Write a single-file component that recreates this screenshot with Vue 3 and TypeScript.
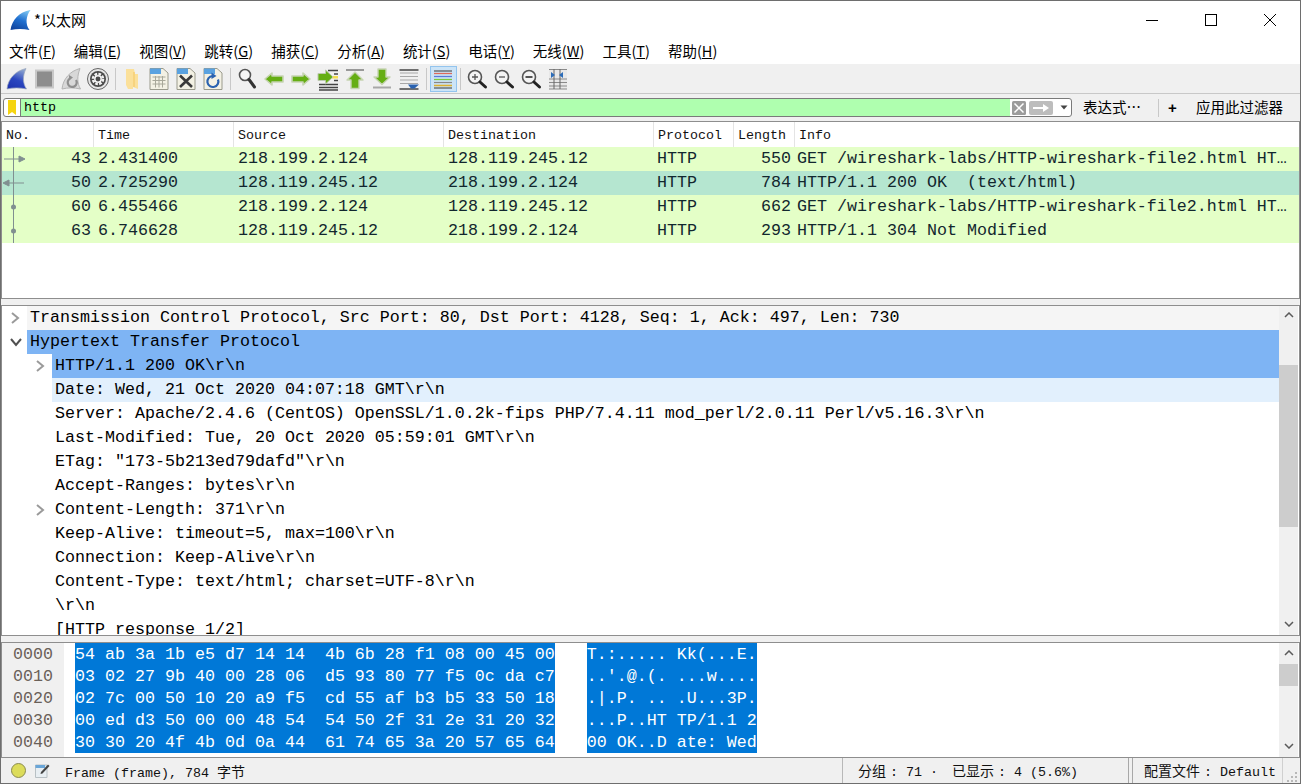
<script setup lang="ts">
interface Packet {
  no: number;
  time: string;
  src: string;
  dst: string;
  proto: string;
  len: number;
  info: string;
  mark: "out" | "in" | "dot";
  sel?: boolean;
}
interface TreeRow {
  text: string;
  level: number;
  arrow?: "right" | "down";
  cls?: string;
}

const menus = [
  ["文件(", "F", ")"],
  ["编辑(", "E", ")"],
  ["视图(", "V", ")"],
  ["跳转(", "G", ")"],
  ["捕获(", "C", ")"],
  ["分析(", "A", ")"],
  ["统计(", "S", ")"],
  ["电话(", "Y", ")"],
  ["无线(", "W", ")"],
  ["工具(", "T", ")"],
  ["帮助(", "H", ")"],
];

const columns = [
  { name: "No.", cls: "c-no" },
  { name: "Time", cls: "c-time" },
  { name: "Source", cls: "c-src" },
  { name: "Destination", cls: "c-dst" },
  { name: "Protocol", cls: "c-proto" },
  { name: "Length", cls: "c-len" },
  { name: "Info", cls: "c-info" },
];

const packets: Packet[] = [
  { no: 43, time: "2.431400", src: "218.199.2.124", dst: "128.119.245.12", proto: "HTTP", len: 550, info: "GET /wireshark-labs/HTTP-wireshark-file2.html HT…", mark: "out" },
  { no: 50, time: "2.725290", src: "128.119.245.12", dst: "218.199.2.124", proto: "HTTP", len: 784, info: "HTTP/1.1 200 OK  (text/html)", mark: "in", sel: true },
  { no: 60, time: "6.455466", src: "218.199.2.124", dst: "128.119.245.12", proto: "HTTP", len: 662, info: "GET /wireshark-labs/HTTP-wireshark-file2.html HT…", mark: "dot" },
  { no: 63, time: "6.746628", src: "128.119.245.12", dst: "218.199.2.124", proto: "HTTP", len: 293, info: "HTTP/1.1 304 Not Modified", mark: "dot" },
];

const tree: TreeRow[] = [
  { text: "Transmission Control Protocol, Src Port: 80, Dst Port: 4128, Seq: 1, Ack: 497, Len: 730", level: 0, arrow: "right", cls: "hover" },
  { text: "Hypertext Transfer Protocol", level: 0, arrow: "down", cls: "sel" },
  { text: "HTTP/1.1 200 OK\\r\\n", level: 1, arrow: "right", cls: "sel" },
  { text: "Date: Wed, 21 Oct 2020 04:07:18 GMT\\r\\n", level: 1, cls: "related" },
  { text: "Server: Apache/2.4.6 (CentOS) OpenSSL/1.0.2k-fips PHP/7.4.11 mod_perl/2.0.11 Perl/v5.16.3\\r\\n", level: 1 },
  { text: "Last-Modified: Tue, 20 Oct 2020 05:59:01 GMT\\r\\n", level: 1 },
  { text: 'ETag: "173-5b213ed79dafd"\\r\\n', level: 1 },
  { text: "Accept-Ranges: bytes\\r\\n", level: 1 },
  { text: "Content-Length: 371\\r\\n", level: 1, arrow: "right" },
  { text: "Keep-Alive: timeout=5, max=100\\r\\n", level: 1 },
  { text: "Connection: Keep-Alive\\r\\n", level: 1 },
  { text: "Content-Type: text/html; charset=UTF-8\\r\\n", level: 1 },
  { text: "\\r\\n", level: 1 },
  { text: "[HTTP response 1/2]", level: 1 },
];

const hexRows = [
  ["0000", "54 ab 3a 1b e5 d7 14 14  4b 6b 28 f1 08 00 45 00", "T.:..... Kk(...E."],
  ["0010", "03 02 27 9b 40 00 28 06  d5 93 80 77 f5 0c da c7", "..'.@.(. ...w...."],
  ["0020", "02 7c 00 50 10 20 a9 f5  cd 55 af b3 b5 33 50 18", ".|.P. .. .U...3P."],
  ["0030", "00 ed d3 50 00 00 48 54  54 50 2f 31 2e 31 20 32", "...P..HT TP/1.1 2"],
  ["0040", "30 30 20 4f 4b 0d 0a 44  61 74 65 3a 20 57 65 64", "00 OK..D ate: Wed"],
];
</script>

<template>
  <div class="window">
    <header class="titlebar">
      <svg class="logo" width="21" height="22" viewBox="0 0 21 22">
        <defs>
          <linearGradient id="fin" x1="0.7" y1="0" x2="0.3" y2="1">
            <stop offset="0" stop-color="#7cc4f0" />
            <stop offset="0.5" stop-color="#1f6fd0" />
            <stop offset="1" stop-color="#10459f" />
          </linearGradient>
        </defs>
        <path d="M0.5 21C2 11 9 3 20.5 1C16 7 15 15 19.500 21C13 19.5 7 19.5 0.5 21Z" fill="url(#fin)" />
      </svg>
      <span class="title">*以太网</span>
      <div class="controls">
        <svg width="14" height="14" viewBox="0 0 14 14"><path d="M1 7.5H13" stroke="#000" fill="none" /></svg>
        <svg width="14" height="14" viewBox="0 0 14 14"><rect x="1.5" y="1.5" width="11" height="11" stroke="#000" fill="none" /></svg>
        <svg width="14" height="14" viewBox="0 0 14 14"><path d="M1 1L13 13M13 1L1 13" stroke="#000" fill="none" /></svg>
      </div>
    </header>

    <nav class="menubar">
      <span v-for="m in menus" :key="m[1]" class="menu-item">{{ m[0] }}<u>{{ m[1] }}</u>{{ m[2] }}</span>
    </nav>

    <div class="toolbar">
      <!-- start capture -->
      <button class="tool"><svg viewBox="0 0 24 24"><defs><linearGradient id="finb" x1="0.7" y1="0" x2="0.3" y2="1"><stop offset="0" stop-color="#8ea6cf" /><stop offset="0.55" stop-color="#2a46c0" /><stop offset="1" stop-color="#1f35b0" /></linearGradient></defs><path d="M2 22C3 12 10 4 21 1.500C17.500 9 17.500 16 21.500 22C15 20.500 8 20.500 2 22Z" fill="url(#finb)" stroke="#9aa6bc" stroke-width=".7" /></svg></button>
      <!-- stop -->
      <button class="tool"><svg viewBox="0 0 24 24"><rect x="4" y="3.500" width="17" height="17" fill="#8d8d8d" stroke="#c8c8c8" stroke-width="2" /></svg></button>
      <!-- restart -->
      <button class="tool"><svg viewBox="0 0 24 24"><path d="M3 22C4 12 11 4 21 1.500C18 9 18 16 21.500 22C15 20.500 9 20.500 3 22Z" fill="#d8d8d8" stroke="#b4b4b4" /><path d="M11 11.500A4.500 4.500 0 1 0 17 13" fill="none" stroke="#8f8f8f" stroke-width="2.200" /><path d="M10 8L14 10.500L10 13.500Z" fill="#8f8f8f" /></svg></button>
      <!-- options -->
      <button class="tool"><svg viewBox="0 0 24 24"><circle cx="12" cy="12" r="10.500" fill="#e6e6e6" stroke="#666" /><circle cx="12" cy="12" r="8" fill="#4a4a4a" /><circle cx="12" cy="12" r="5" fill="none" stroke="#f2f2f2" stroke-width="2.600" stroke-dasharray="2.600 1.300" /><circle cx="12" cy="12" r="3.200" fill="none" stroke="#f2f2f2" stroke-width="1.500" /></svg></button>
      <span class="sep"></span>
      <!-- open: a folder standing up -->
      <button class="tool"><svg viewBox="0 0 24 24"><path d="M6 2H14L15 7H18V22L13 20V22H8L6 18Z" fill="#fbe09a" /><path d="M13 5H15V20H13Z" fill="#f3c661" opacity=".5" /></svg></button>
      <!-- file -->
      <button class="tool"><svg viewBox="0 0 24 24"><path d="M3 1.500H16L21 6V22.500H3Z" fill="#f3f1e4" stroke="#9a9a8c" /><path d="M3 1.500H14V7H3Z" fill="#5aa2e0" /><path d="M5.500 10H18.500M5.500 13.500H18.500M5.500 17H18.500M8.500 9V20.500M12 9V20.500M15.500 9V20.500" stroke="#a8a89a" fill="none" /></svg></button>
      <!-- close file -->
      <button class="tool"><svg viewBox="0 0 24 24"><path d="M3 1.500H16L21 6V22.500H3Z" fill="#f3f1e4" stroke="#9a9a8c" /><path d="M3 1.500H14V7H3Z" fill="#5aa2e0" /><path d="M6 8.500L18 20M18 8.500L6 20" stroke="#3a3a3a" stroke-width="2.600" fill="none" /></svg></button>
      <!-- reload file -->
      <button class="tool"><svg viewBox="0 0 24 24"><path d="M3 1.500H16L21 6V22.500H3Z" fill="#f3f1e4" stroke="#9a9a8c" /><path d="M3 1.500H14V7H3Z" fill="#5aa2e0" /><path d="M17 12.500A5.500 5.500 0 1 1 11.500 9" fill="none" stroke="#2a62b0" stroke-width="2.200" /><path d="M10.500 5.500L15.500 9L10.500 12Z" fill="#2a62b0" /></svg></button>
      <span class="sep"></span>
      <!-- find -->
      <button class="tool"><svg viewBox="0 0 24 24"><circle cx="10" cy="8" r="5.500" fill="#f4f4f4" stroke="#555" stroke-width="1.600" /><path d="M14 12.500L19.500 20" stroke="#333" stroke-width="3" stroke-linecap="round" /></svg></button>
      <!-- back -->
      <button class="tool"><svg viewBox="0 0 24 24"><path d="M3 12L10 6V9H21V15H10V18Z" fill="#65ae14" stroke="#c6d4b2" stroke-width="1.600" stroke-linejoin="round" /></svg></button>
      <!-- forward -->
      <button class="tool"><svg viewBox="0 0 24 24"><path d="M21 12L14 6V9H3V15H14V18Z" fill="#65ae14" stroke="#c6d4b2" stroke-width="1.600" stroke-linejoin="round" /></svg></button>
      <!-- go to packet -->
      <button class="tool"><svg viewBox="0 0 24 24"><path d="M3 17.500H22M3 20.500H22M3 23H22M12 3.500H22M18 7H22M18 13.500H22" stroke="#444" stroke-width="1.300" fill="none" /><path d="M16 9H22V11.500H16Z" fill="#f4dc50" /><path d="M17 10L9.500 3V6.500H2V13.500H9.500V17Z" fill="#65ae14" stroke="#bcc9ae" /></svg></button>
      <!-- first -->
      <button class="tool"><svg viewBox="0 0 24 24"><path d="M3 3H21" stroke="#999" stroke-width="2" /><path d="M12 5L20 13H16V21.500H8V13H4Z" fill="#65ae14" stroke="#c6d4b2" stroke-width="1.400" stroke-linejoin="round" /></svg></button>
      <!-- last -->
      <button class="tool"><svg viewBox="0 0 24 24"><path d="M3 20.500H21" stroke="#a8a8a8" stroke-width="2" /><path d="M12 17.500L20 10H16V2H8V10H4Z" fill="#65ae14" stroke="#c6d4b2" stroke-width="1.400" stroke-linejoin="round" /></svg></button>
      <!-- auto scroll -->
      <button class="tool"><svg viewBox="0 0 24 24"><path d="M3 6H21M3 9.500H21M3 13H21M3 16.500H21" stroke="#a8a8a8" fill="none" /><path d="M2.500 3H21.500M2.500 22H21.500" stroke="#444" stroke-width="1.300" fill="none" /><path d="M11 17.500H22L17.500 21.500H14Z" fill="#2a62b0" /></svg></button>
      <span class="sep"></span>
      <!-- colorize, pressed -->
      <button class="tool on"><svg viewBox="0 0 24 24"><path d="M3 4H21" stroke="#555" stroke-width="1.200" /><path d="M3 6.500H21" stroke="#dd6a5a" stroke-width="1.300" /><path d="M3 9.500H21" stroke="#5a7ad8" stroke-width="1.300" /><path d="M3 12.500H21" stroke="#7ac83c" stroke-width="1.300" /><path d="M3 15.500H21" stroke="#888" stroke-width="1.200" /><path d="M3 18.500H21" stroke="#dcb030" stroke-width="1.600" /><path d="M3 21H21" stroke="#555" stroke-width="1.200" /></svg></button>
      <span class="sep"></span>
      <!-- zoom in -->
      <button class="tool"><svg viewBox="0 0 24 24"><circle cx="10" cy="10" r="6.500" fill="#f4f4f4" stroke="#555" stroke-width="1.600" /><path d="M7 10H13M10 7V13" stroke="#555" stroke-width="1.300" /><path d="M15 15L20.500 20" stroke="#222" stroke-width="3" stroke-linecap="round" /></svg></button>
      <!-- zoom out -->
      <button class="tool"><svg viewBox="0 0 24 24"><circle cx="10" cy="10" r="6.500" fill="#f4f4f4" stroke="#555" stroke-width="1.600" /><path d="M7 10H13" stroke="#555" stroke-width="1.300" /><path d="M15 15L20.500 20" stroke="#222" stroke-width="3" stroke-linecap="round" /></svg></button>
      <!-- normal size -->
      <button class="tool"><svg viewBox="0 0 24 24"><circle cx="10" cy="10" r="6.500" fill="#f4f4f4" stroke="#555" stroke-width="1.600" /><path d="M6.500 9H13.500V11H6.500Z" fill="#555" /><path d="M15 15L20.500 20" stroke="#222" stroke-width="3" stroke-linecap="round" /></svg></button>
      <!-- resize columns -->
      <button class="tool"><svg viewBox="0 0 24 24"><rect x="3" y="2" width="18" height="20" fill="#e8e8e8" /><path d="M3 2.500H21M3 12H21M3 15.500H21M3 19H21M3 22H21" stroke="#8a8a8a" fill="none" /><path d="M8 2V22M14 2V22" stroke="#666" fill="none" /><path d="M5 5L9 8L5 11ZM17 5L13 8L17 11Z" fill="#2c6cb8" /></svg></button>
    </div>

    <div class="filterbar">
      <div class="filter-input">
        <span class="bookmark"><svg width="10" height="15" viewBox="0 0 10 15"><path d="M1 0H9V15L5 12L1 15Z" fill="#f5d40f" /></svg></span>
        <span class="filter-text">http</span>
        <span class="filter-btns">
          <svg class="clear" width="14" height="14" viewBox="0 0 14 14"><rect width="14" height="14" rx="1.5" fill="#9c9c9c" /><path d="M2.500 2.500L11.500 11.500M11.500 2.500L2.500 11.500" stroke="#fff" stroke-width="1.500" /></svg>
          <svg class="apply" width="24" height="14" viewBox="0 0 24 14"><rect width="24" height="14" rx="2" fill="#bdbdbd" /><path d="M4 6H14V3L20 7L14 11V8H4Z" fill="#fff" /></svg>
          <svg class="caret" width="8" height="5" viewBox="0 0 8 5"><path d="M0.500 0.500H7.500L4 4.500Z" fill="#444" /></svg>
        </span>
      </div>
      <span class="filter-action expr">表达式…</span>
      <span class="filter-sep"></span>
      <span class="filter-plus">+</span>
      <span class="filter-action">应用此过滤器</span>
    </div>

    <section class="packets">
      <div class="pk-head">
        <span v-for="c in columns" :key="c.name" class="pk-col" :class="c.cls">{{ c.name }}</span>
      </div>
      <div v-for="p in packets" :key="p.no" class="pk-row" :class="{ picked: p.sel }">
        <span class="c-no num">
          <svg class="mark" width="28" height="24" viewBox="0 0 28 24">
            <path d="M11.500 0V24" stroke="#808f90" fill="none" />
            <path v-if="p.mark === 'out'" d="M2 12H17M17 9L23 12L17 15Z" stroke="#808f90" fill="#808f90" />
            <path v-if="p.mark === 'in'" d="M7 12H22M7 9L1 12L7 15Z" stroke="#808f90" fill="#808f90" />
            <circle v-if="p.mark === 'dot'" cx="11.500" cy="12" r="2.500" fill="#808f90" />
          </svg>
          {{ p.no }}
        </span>
        <span class="c-time">{{ p.time }}</span>
        <span class="c-src">{{ p.src }}</span>
        <span class="c-dst">{{ p.dst }}</span>
        <span class="c-proto">{{ p.proto }}</span>
        <span class="c-len num">{{ p.len }}</span>
        <span class="c-info">{{ p.info }}</span>
      </div>
    </section>

    <div class="sash"></div>

    <section class="details">
      <div class="tree">
        <div v-for="(r, i) in tree" :key="i" class="tree-row">
          <span class="gutter" :class="'lv' + r.level">
            <svg v-if="r.arrow === 'right'" width="10" height="12" viewBox="0 0 10 12"><path d="M2 1L8 6L2 11" stroke="#9a9a9a" stroke-width="2" fill="none" /></svg>
            <svg v-if="r.arrow === 'down'" width="12" height="10" viewBox="0 0 12 10"><path d="M1 2L6 8L11 2" stroke="#505050" stroke-width="2" fill="none" /></svg>
          </span>
          <span class="label" :class="r.cls">{{ r.text }}</span>
        </div>
      </div>
      <div class="scroll">
        <svg class="chev" width="10" height="6" viewBox="0 0 10 6"><path d="M1 5L5 1L9 5" stroke="#5a5a5a" stroke-width="1.500" fill="none" /></svg>
        <div class="thumb thumb-tree"></div>
        <svg class="chev end" width="10" height="6" viewBox="0 0 10 6"><path d="M1 1L5 5L9 1" stroke="#5a5a5a" stroke-width="1.500" fill="none" /></svg>
      </div>
    </section>

    <div class="sash"></div>

    <section class="bytes">
      <div class="hex">
        <div class="offsets">
          <div v-for="h in hexRows" :key="h[0]" class="hex-row">{{ h[0] }}</div>
        </div>
        <div class="hex-col">
          <div v-for="h in hexRows" :key="h[0]" class="hex-row">{{ h[1] }}</div>
        </div>
        <div class="hex-col ascii">
          <div v-for="h in hexRows" :key="h[0]" class="hex-row">{{ h[2] }}</div>
        </div>
      </div>
      <div class="scroll">
        <svg class="chev top-hex" width="10" height="6" viewBox="0 0 10 6"><path d="M1 5L5 1L9 5" stroke="#5a5a5a" stroke-width="1.500" fill="none" /></svg>
        <div class="thumb thumb-hex"></div>
        <svg class="chev end" width="10" height="6" viewBox="0 0 10 6"><path d="M1 1L5 5L9 1" stroke="#5a5a5a" stroke-width="1.500" fill="none" /></svg>
      </div>
    </section>

    <footer class="statusbar">
      <span class="led"></span>
      <svg class="note" width="15" height="15" viewBox="0 0 15 15"><path d="M0.500 2H12V14.500H0.500Z" fill="#e8eef2" stroke="#b8c0c4" /><path d="M0.500 2H10V5H0.500Z" fill="#6aa6d8" /><path d="M6 9L13 1.500L14.500 3L7.500 10.500L5.500 11Z" fill="#444" /></svg>
      <span class="st-main">Frame (frame), 784 <span class="zh">字节</span></span>
      <span class="st-stats"><span class="zh gap">分组</span>: 71 · <span class="zh gap lead">已显示</span>: 4 (5.6%)</span>
      <span class="st-split"></span>
      <span class="st-profile"><span class="zh gap">配置文件</span>: Default</span>
      <span class="grip">
        <svg width="12" height="12" viewBox="0 0 12 12"><path d="M9 1h2v2H9zM5 5h2v2H5zM9 5h2v2H9zM1 9h2v2H1zM5 9h2v2H5zM9 9h2v2H9z" fill="#b8b8b8" /></svg>
      </span>
    </footer>
  </div>
</template>

<style scoped>
.window {
  width: 1301px;
  height: 784px;
  box-sizing: border-box;
  border: 1px solid #6e6e6e;
  background: #f0f0f0;
  display: flex;
  flex-direction: column;
  overflow: hidden;
  font-family: "Noto Sans CJK SC", sans-serif;
  color: #000;
}

.titlebar {
  height: 39px;
  flex: none;
  box-sizing: border-box;
  background: #fff;
  display: flex;
  align-items: center;
  padding: 0 0 2px 9px;
}
.logo {
  margin-right: 3px;
}
.title {
  font-size: 15px;
}
.controls {
  margin-left: auto;
  display: flex;
  gap: 45px;
  padding-right: 23px;
}

.menubar {
  height: 24px;
  flex: none;
  box-sizing: border-box;
  background: #fff;
  display: flex;
  align-items: center;
  padding: 0 0 3px 8px;
  gap: 18px;
  font-size: 14.5px;
}
.menu-item {
  white-space: nowrap;
}

.toolbar {
  height: 29px;
  flex: none;
  box-sizing: border-box;
  display: flex;
  align-items: center;
  padding-left: 2.5px;
  border-bottom: 1px solid #c8c8c8;
  margin-top: 1px;
}
.tool {
  width: 27px;
  height: 26px;
  padding: 0;
  border: 1px solid transparent;
  background: none;
  display: flex;
  align-items: center;
  justify-content: center;
  flex: none;
  box-sizing: border-box;
}
.tool svg {
  width: 24px;
  height: 24px;
  flex: none;
}
.tool.on {
  background: #cce4f7;
  border-color: #93c4ee;
}
.sep {
  width: 1px;
  height: 22px;
  margin: 0 3px;
  background: #c8c8c8;
  flex: none;
}

.filterbar {
  height: 27px;
  flex: none;
  display: flex;
  align-items: center;
  padding-left: 2px;
  font-size: 14.5px;
}
.filter-input {
  width: 1069px;
  height: 19px;
  box-sizing: border-box;
  border: 1px solid #7a7a7a;
  border-radius: 3px;
  background: #fff;
  display: flex;
  align-items: stretch;
  overflow: hidden;
  flex: none;
}
.bookmark {
  width: 17px;
  border-right: 1px solid #7a7a7a;
  display: flex;
  align-items: flex-start;
  justify-content: center;
  flex: none;
  box-sizing: border-box;
}
.bookmark svg {
  margin-top: 1px;
}
.filter-text {
  flex: 1;
  background: #afffaf;
  font-family: "Liberation Mono", monospace;
  font-size: 13.33px;
  line-height: 18px;
  padding-left: 3px;
}
.filter-btns {
  width: 61px;
  display: flex;
  align-items: center;
  flex: none;
  padding-left: 2px;
  box-sizing: border-box;
}
.apply {
  margin-left: 3px;
}
.caret {
  margin-left: 7px;
}
.filter-action {
  white-space: nowrap;
  margin-top: -3px;
  margin-left: -1px;
}
.expr {
  margin-left: 11px;
  width: 59px;
}
.filter-sep {
  width: 1px;
  height: 18px;
  background: #c8c8c8;
  margin-left: 16px;
}
.filter-plus {
  width: 38px;
  padding-left: 9px;
  box-sizing: border-box;
  font-weight: 700;
  font-family: "Liberation Sans", sans-serif;
  font-size: 15px;
}

.packets {
  height: 178px;
  flex: none;
  box-sizing: border-box;
  border: 1px solid #8e8e8e;
  background: #fff;
  font-family: "Liberation Mono", monospace;
}
.pk-head {
  display: flex;
  height: 25px;
  font-size: 13.33px;
}
.pk-col {
  border-right: 1px solid #e4e4e4;
  height: 100%;
  line-height: 25px;
  padding: 1px 0 0 4px;
  box-sizing: border-box;
  color: #111;
  white-space: nowrap;
}
.pk-row {
  display: flex;
  height: 24px;
  line-height: 24px;
  background: #e4ffc7;
  color: #12272e;
  font-size: 16.67px;
  white-space: pre;
}
.pk-row.picked {
  background: #b5e6d0;
}
.pk-row > span {
  padding: 0 3px 0 4px;
  box-sizing: border-box;
  flex: none;
  overflow: hidden;
}
.pk-row .num {
  text-align: right;
  padding-right: 3px;
}
.pk-row .c-proto {
  padding-left: 3px;
}
.pk-row .c-len {
  padding-right: 4px;
}
.pk-row .c-info {
  padding-left: 2px;
}
.c-no {
  width: 92px;
  position: relative;
}
.c-time {
  width: 140px;
}
.c-src,
.c-dst {
  width: 210px;
}
.c-proto {
  width: 80px;
}
.c-len {
  width: 61px;
}
.c-info {
  width: 504px;
}
.pk-col.c-info {
  border-right: none;
}
.mark {
  position: absolute;
  left: 0;
  top: 0;
}

.sash {
  height: 6px;
  flex: none;
  background: #f0f0f0;
}

.details {
  height: 331px;
  flex: none;
  box-sizing: border-box;
  border: 1px solid #8e8e8e;
  background: #fff;
  display: flex;
  overflow: hidden;
}
.tree {
  flex: 1;
  min-width: 0;
  overflow: hidden;
  font-family: "Liberation Mono", monospace;
  font-size: 16.67px;
}
.tree-row {
  display: flex;
  height: 24px;
  line-height: 24px;
  white-space: pre;
}
.gutter {
  flex: none;
  display: flex;
  align-items: center;
  box-sizing: border-box;
}
.gutter.lv0 {
  width: 25px;
  padding-left: 8px;
}
.gutter.lv1 {
  width: 50px;
  padding-left: 33px;
}
.label {
  flex: 1;
  padding-left: 3px;
}
.label.hover {
  background: #f5f5f5;
}
.label.sel {
  background: #7eb4f4;
}
.label.related {
  background: #e2f0fd;
}

.scroll {
  width: 19px;
  margin-right: 1px;
  flex: none;
  background: #f0f0f0;
  display: flex;
  flex-direction: column;
  align-items: center;
}
.chev {
  margin-top: 6px;
  flex: none;
}
.chev.top-hex {
  margin-top: 7px;
}
.chev.end {
  margin-top: auto;
  margin-bottom: 8px;
}
.thumb {
  width: 100%;
  background: #cdcdcd;
  flex: none;
}
.thumb-tree {
  height: 162px;
  margin-top: 47px;
}
.thumb-hex {
  height: 22px;
  margin-top: 8px;
}

.bytes {
  height: 116px;
  flex: none;
  box-sizing: border-box;
  border: 1px solid #8e8e8e;
  background: #fff;
  display: flex;
  overflow: hidden;
}
.hex {
  flex: 1;
  display: flex;
  align-items: flex-start;
  font-family: "Liberation Mono", monospace;
  font-size: 16.67px;
  white-space: pre;
  height: 100%;
}
.hex-row {
  height: 22px;
  box-sizing: border-box;
  padding-top: 2px;
  line-height: 20px;
}
.offsets {
  width: 62px;
  height: 100%;
  background: #f0f0f0;
  box-sizing: border-box;
  padding-left: 11px;
  color: #6a6058;
  flex: none;
}
.hex-col {
  margin-left: 11px;
  background: #0078d7;
  color: #fff;
  flex: none;
}
.hex-col.ascii {
  margin-left: 32px;
}

.statusbar {
  flex: 1;
  min-height: 0;
  display: flex;
  align-items: center;
  padding-left: 10px;
  font-family: "Liberation Mono", monospace;
  font-size: 13.33px;
  color: #111;
  white-space: pre;
}
.zh {
  font-family: "Noto Sans CJK SC", sans-serif;
  font-size: 14px;
}
.zh.gap {
  margin-right: 4px;
}
.zh.lead {
  margin-left: 6px;
}
.led {
  width: 13px;
  height: 13px;
  border-radius: 50%;
  background: #dcdc5a;
  border: 1px solid #8a8a50;
  flex: none;
}
.note {
  margin-left: 9px;
  flex: none;
}
.st-main {
  margin-left: 15px;
  flex: 1;
}
.st-stats {
  width: 286px;
  box-sizing: border-box;
  padding-left: 15px;
  border-left: 1px solid #b8b8b8;
  height: 100%;
  line-height: 25px;
  flex: none;
}
.st-split {
  width: 5px;
  box-sizing: border-box;
  height: 100%;
  border-left: 1px solid #a8a8a8;
  border-right: 1px solid #a8a8a8;
  flex: none;
}
.st-profile {
  width: 150px;
  padding-left: 11px;
  box-sizing: border-box;
  height: 100%;
  line-height: 25px;
  border-right: 1px solid #d0d0d0;
  flex: none;
}
.grip {
  width: 17px;
  height: 100%;
  display: flex;
  align-items: flex-end;
  justify-content: flex-end;
  padding-right: 2px;
  box-sizing: border-box;
  flex: none;
}
</style>
